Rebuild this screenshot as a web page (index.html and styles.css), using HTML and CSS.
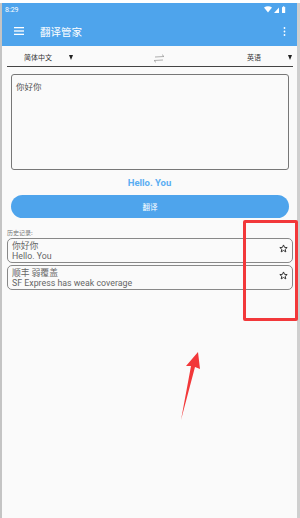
FILE: index.html
```html
<!DOCTYPE html>
<html>
<head>
<meta charset="utf-8">
<link rel="stylesheet" href="styles.css">
</head>
<body>
<div class="phone">
  <div class="status">
    <span class="time">8:29</span>
    <span class="sicons">
      <svg width="22" height="8" viewBox="0 0 22 8">
        <path d="M0 1.5 Q4 -1 8 1.5 L4 6.5 Z" fill="#fff"/>
        <path d="M10 7 L15 1.5 L15 7 Z" fill="#fff"/>
        <rect x="18" y="1" width="3.2" height="6" rx="0.6" fill="#fff"/>
        <rect x="18.9" y="0.3" width="1.4" height="1" fill="#fff"/>
      </svg>
    </span>
  </div>
  <div class="toolbar">
    <svg class="menu" width="10" height="8" viewBox="0 0 10 8">
      <rect x="0" y="0" width="10" height="1.3" fill="#fff"/>
      <rect x="0" y="3.35" width="10" height="1.3" fill="#fff"/>
      <rect x="0" y="6.7" width="10" height="1.3" fill="#fff"/>
    </svg>
    <span class="title">翻译管家</span>
    <svg class="more" width="3" height="9" viewBox="0 0 3 9">
      <circle cx="1.5" cy="1" r="0.9" fill="#fff"/>
      <circle cx="1.5" cy="4.5" r="0.9" fill="#fff"/>
      <circle cx="1.5" cy="8" r="0.9" fill="#fff"/>
    </svg>
  </div>
  <div class="langrow">
    <div class="lang left"><span>简体中文</span><span class="tri"></span></div>
    <svg class="swap" width="14" height="9" viewBox="0 0 14 9">
      <path d="M3 3 L12 2.5 L10 0.6" fill="none" stroke="#9a9a9a" stroke-width="0.8"/>
      <path d="M11 6 L2 6.5 L4 8.4" fill="none" stroke="#9a9a9a" stroke-width="0.8"/>
    </svg>
    <div class="lang right"><span>英语</span><span class="tri"></span></div>
  </div>
  <div class="input">你好你</div>
  <div class="result">Hello. You</div>
  <div class="btn">翻译</div>
  <div class="histlabel">历史记录:</div>
  <div class="hist">
    <div class="item">
      <div class="texts">
        <div class="src">你好你</div>
        <div class="dst">Hello. You</div>
      </div>
      <svg class="star" width="9" height="9" viewBox="0 0 24 24">
        <path d="M12 2.5 L14.9 9 L21.8 9.5 L16.5 14.1 L18.2 21 L12 17.3 L5.8 21 L7.5 14.1 L2.2 9.5 L9.1 9 Z" fill="none" stroke="#222" stroke-width="2.4" stroke-linejoin="round"/>
      </svg>
    </div>
    <div class="item">
      <div class="texts">
        <div class="src">顺丰 弱覆盖</div>
        <div class="dst">SF Express has weak coverage</div>
      </div>
      <svg class="star" width="9" height="9" viewBox="0 0 24 24">
        <path d="M12 2.5 L14.9 9 L21.8 9.5 L16.5 14.1 L18.2 21 L12 17.3 L5.8 21 L7.5 14.1 L2.2 9.5 L9.1 9 Z" fill="none" stroke="#222" stroke-width="2.4" stroke-linejoin="round"/>
      </svg>
    </div>
  </div>
  <div class="redbox"></div>
  <svg class="arrow" width="30" height="72" viewBox="0 0 30 72">
    <path d="M3 70 L13 16 L8 16 L20 2 L22 19 L17 17 Z" fill="#f2383a"/>
  </svg>
</div>
</body>
</html>
```
FILE: styles.css
```css
html, body {
  margin: 0;
  padding: 0;
  background: #ffffff;
}
body {
  width: 300px;
  height: 518px;
  overflow: hidden;
  font-family: Roboto, "Noto Sans CJK SC", sans-serif;
}
.phone {
  position: relative;
  margin-top: 3px;
  height: 515px;
  border-left: 2px solid #c4c4c4;
  border-right: 3px solid #cfcfcf;
  background: #fafafa;
  display: flex;
  flex-direction: column;
}
.status {
  height: 13px;
  background: #4ea4ec;
  display: flex;
  align-items: center;
  justify-content: space-between;
  padding: 0 11px 0 3px;
}
.time {
  color: #fff;
  font-size: 7px;
  font-family: Roboto, sans-serif;
}
.sicons {
  display: flex;
}
.sicons svg {
  display: block;
}
.toolbar {
  height: 30px;
  background: #4ea4ec;
  display: flex;
  align-items: center;
  padding: 0 11px 0 12px;
}
.menu {
  display: block;
}
.title {
  color: #fff;
  font-size: 10.5px;
  margin-left: 16px;
  flex: 1;
  font-family: "Noto Sans CJK SC", sans-serif;
}
.more {
  display: block;
}
.langrow {
  height: 19px;
  margin: 0 4px 0 5px;
  border-bottom: 1px solid #444;
  display: flex;
  align-items: center;
  justify-content: space-between;
  padding-top: 1px;
}
.lang {
  display: flex;
  align-items: center;
  font-size: 7px;
  color: #333;
  font-family: "Noto Sans CJK SC", sans-serif;
}
.lang.left {
  padding-left: 17px;
  width: 120px;
}
.lang.left .tri {
  margin-left: 17px;
}
.lang.right {
  width: 120px;
  justify-content: flex-end;
}
.lang.right .tri {
  margin-left: 27px;
  margin-right: 1px;
}
.tri {
  width: 0;
  height: 0;
  margin-top: 2px;
  border-left: 2.8px solid transparent;
  border-right: 2.8px solid transparent;
  border-top: 5px solid #222;
}
.swap {
  display: block;
  margin-top: 4px;
}
.input {
  margin: 7px 8px 0 9px;
  border: 1px solid #777;
  border-radius: 3px;
  padding: 5px 4px;
  box-sizing: border-box;
  height: 96px;
  font-size: 8.5px;
  color: #555;
  font-family: "Noto Sans CJK SC", sans-serif;
}
.result {
  height: 25px;
  display: flex;
  align-items: center;
  justify-content: center;
  font-size: 9.5px;
  font-weight: bold;
  color: #5aaef2;
  padding-bottom: 1px;
  box-sizing: border-box;
}
.btn {
  margin: 0 8px 0 9px;
  height: 23px;
  border-radius: 12px;
  background: #4ea4ec;
  color: #fff;
  font-size: 7.5px;
  display: flex;
  align-items: center;
  justify-content: center;
  font-family: "Noto Sans CJK SC", sans-serif;
}
.histlabel {
  height: 20px;
  padding: 11px 0 0 5px;
  box-sizing: border-box;
  font-size: 6px;
  line-height: 8px;
  color: #777;
  font-family: "Noto Sans CJK SC", sans-serif;
}
.hist {
  display: flex;
  flex-direction: column;
  gap: 2px;
  margin: 0 4px 0 5px;
}
.item {
  height: 25px;
  box-sizing: border-box;
  border: 1px solid #888;
  border-radius: 5px;
  display: flex;
  justify-content: space-between;
  padding: 1px 4px 0 4px;
}
.texts {
  font-size: 8.8px;
  line-height: 11px;
  color: #666;
}
.src {
  font-family: "Noto Sans CJK SC", sans-serif;
  line-height: 11px;
}
.dst {
  font-family: Roboto, sans-serif;
}
.star {
  display: block;
  margin-top: 4px;
}
.redbox {
  position: absolute;
  left: 241px;
  top: 217px;
  width: 55px;
  height: 101px;
  box-sizing: border-box;
  border: 3px solid #f2383a;
  border-radius: 2px;
}
.arrow {
  position: absolute;
  left: 176px;
  top: 347px;
}
```
